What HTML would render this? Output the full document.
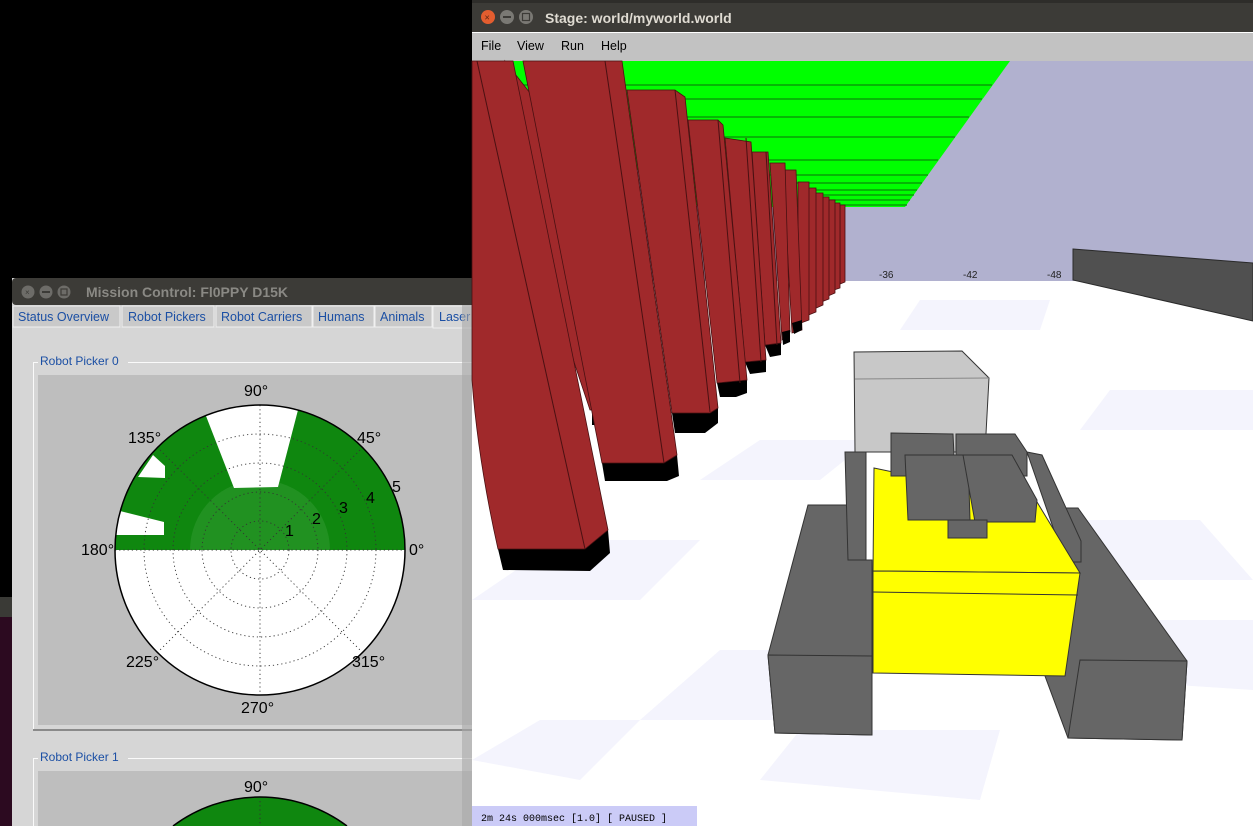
<!DOCTYPE html>
<html><head><meta charset="utf-8"><style>
html,body{margin:0;padding:0;width:1253px;height:826px;overflow:hidden;background:#000;font-family:"Liberation Sans",sans-serif}
svg{position:absolute;left:0;top:0}
</style></head><body>
<svg width="1253" height="826" viewBox="0 0 1253 826" xmlns="http://www.w3.org/2000/svg">
<rect x="0" y="0" width="1253" height="826" fill="#000"/>
<rect x="0" y="597" width="14" height="229" fill="#2c0a20"/>
<rect x="0" y="597" width="14" height="20" fill="#3a3a36"/>
<rect x="12" y="278" width="470" height="548" fill="#d6d6d6"/>
<rect x="12" y="278" width="470" height="27" rx="4" fill="#3c3b37"/>
<circle cx="28" cy="292" r="6.5" fill="#6d6c68"/><circle cx="46" cy="292" r="6.5" fill="#6d6c68"/><circle cx="64" cy="292" r="6.5" fill="#6d6c68"/>
<text x="25" y="295" font-size="8" fill="#3c3b37">×</text>
<rect x="42" y="291" width="8" height="2" fill="#3c3b37"/><rect x="61" y="289" width="6" height="6" fill="none" stroke="#3c3b37" stroke-width="1.2"/>
<text x="86" y="297" font-size="14" font-weight="bold" fill="#8a8984">Mission Control: Fl0PPY D15K</text>
<rect x="12" y="305" width="470" height="22" fill="#c6c6c6"/>
<g font-size="12.5" fill="#1b4fa4">
<rect x="13" y="306" width="107" height="21" fill="#c9c9c9" stroke="#f0f0f0"/><text x="18" y="321">Status Overview</text>
<rect x="122" y="306" width="92" height="21" fill="#c9c9c9" stroke="#f0f0f0"/><text x="128" y="321">Robot Pickers</text>
<rect x="216" y="306" width="96" height="21" fill="#c9c9c9" stroke="#f0f0f0"/><text x="221" y="321">Robot Carriers</text>
<rect x="313" y="306" width="61" height="21" fill="#c9c9c9" stroke="#f0f0f0"/><text x="318" y="321">Humans</text>
<rect x="375" y="306" width="57" height="21" fill="#c9c9c9" stroke="#f0f0f0"/><text x="380" y="321">Animals</text>
<rect x="433" y="306" width="50" height="22" fill="#d6d6d6" stroke="#f0f0f0"/><text x="439" y="321">Laser</text>
</g>
<rect x="33.5" y="362.5" width="450" height="368" fill="none" stroke="#fafafa"/>
<rect x="33" y="729" width="450" height="2" fill="#8a8a8a"/>
<rect x="38" y="375" width="440" height="350" fill="#bebebe"/>
<rect x="38" y="358" width="90" height="10" fill="#d6d6d6"/>
<text x="40" y="365" font-size="12" fill="#1b4fa4">Robot Picker 0</text>
<g>
<circle cx="260" cy="550" r="145" fill="#fff"/>
<path d="M115,550 A145,145 0 0 1 405,550 Z" fill="#0f870f"/>
<path d="M190,550 A70,70 0 0 1 330,550 Z" fill="#3ba13b" opacity="0.4"/>
<path d="M206,416 L234,488 L278,487 L298,410 A145,145 0 0 0 206,416 Z" fill="#fff"/>
<path d="M153,455 L165,466 L165,478 L138,477 Z" fill="#fff"/>
<path d="M120,511 L164,522 L164,535 L116,535 Z" fill="#fff"/>
<g fill="none" stroke="#333" stroke-width="0.9" stroke-dasharray="1.2,3">
<circle cx="260" cy="550" r="29"/><circle cx="260" cy="550" r="58"/><circle cx="260" cy="550" r="87"/><circle cx="260" cy="550" r="116"/>
<line x1="115" y1="550" x2="405" y2="550"/><line x1="260" y1="405" x2="260" y2="695"/>
<line x1="157" y1="447" x2="363" y2="653"/><line x1="363" y1="447" x2="157" y2="653"/>
</g>
<circle cx="260" cy="550" r="145" fill="none" stroke="#000" stroke-width="1.5"/>
<g font-size="16" fill="#000">
<text x="244" y="396">90°</text><text x="128" y="443">135°</text><text x="357" y="443">45°</text>
<text x="81" y="555">180°</text><text x="409" y="555">0°</text>
<text x="126" y="667">225°</text><text x="352" y="667">315°</text><text x="241" y="713">270°</text>
<text x="285" y="536">1</text><text x="312" y="524">2</text><text x="339" y="513">3</text><text x="366" y="503">4</text><text x="392" y="492">5</text>
</g>
</g>
<path d="M33.5,826 V758.5 H483.5" fill="none" stroke="#fafafa"/>
<rect x="38" y="771" width="440" height="55" fill="#bebebe"/>
<rect x="38" y="752" width="90" height="10" fill="#d6d6d6"/>
<text x="40" y="761" font-size="12" fill="#1b4fa4">Robot Picker 1</text>
<text x="244" y="792" font-size="16">90°</text>
<path d="M173,826 A145,145 0 0 1 347,826 Z" fill="#0f870f"/>
<path d="M173,826 A145,145 0 0 1 347,826" fill="none" stroke="#000" stroke-width="1.5"/>
<line x1="260" y1="801" x2="260" y2="826" stroke="#333" stroke-dasharray="1.2,3"/>
<rect x="462" y="305" width="10" height="521" fill="#a8a8a8" opacity="0.6"/>

<rect x="472" y="0" width="781" height="34" fill="#3c3b37"/>
<rect x="472" y="0" width="781" height="3" fill="#2e2d2a"/>
<circle cx="488" cy="17" r="7" fill="#e35d2f"/><text x="484.5" y="20.5" font-size="9" fill="#5a2310">×</text>
<circle cx="507" cy="17" r="7" fill="#7a7974"/><rect x="503" y="16" width="8" height="2" fill="#3c3b37"/>
<circle cx="526" cy="17" r="7" fill="#7a7974"/><rect x="522.5" y="13.5" width="7" height="7" fill="none" stroke="#3c3b37" stroke-width="1.2"/>
<text x="545" y="23" font-size="14" font-weight="bold" fill="#dfdbd2">Stage: world/myworld.world</text>
<rect x="472" y="32" width="781" height="29" fill="#c2c2c2"/>
<rect x="472" y="32" width="781" height="1" fill="#fff"/>
<g font-size="12.5" fill="#000"><text x="481" y="50">File</text><text x="517" y="50">View</text><text x="561" y="50">Run</text><text x="601" y="50">Help</text></g>
<rect x="472" y="61" width="781" height="765" fill="#fff"/>
<rect x="472" y="61" width="781" height="220" fill="#b1b1cf"/>
<g fill="#f4f4fd">
<polygon points="472,600 560,540 700,540 640,600"/>
<polygon points="640,720 720,650 880,650 830,720"/>
<polygon points="472,760 540,720 640,720 580,780"/>
<polygon points="700,480 760,440 870,440 820,480"/>
<polygon points="1000,580 1040,520 1200,520 1253,580"/>
<polygon points="1100,680 1140,620 1253,620 1253,690"/>
<polygon points="1080,430 1110,390 1253,390 1253,430"/>
<polygon points="900,330 920,300 1050,300 1040,330"/>
<polygon points="760,780 800,730 1000,730 980,800"/>
</g>
<polygon points="510,61 1010,61 905,207 845,207 700,207 520,100" fill="#00ff00"/>
<g stroke="#0a8a0a" stroke-width="1.2">
<line x1="520" y1="85" x2="992" y2="85"/><line x1="560" y1="99" x2="982" y2="99"/><line x1="600" y1="117" x2="969" y2="117"/>
<line x1="680" y1="137" x2="955" y2="137"/><line x1="730" y1="160" x2="938" y2="160"/><line x1="760" y1="175" x2="928" y2="175"/>
<line x1="790" y1="183" x2="922" y2="183"/><line x1="805" y1="190" x2="917" y2="190"/><line x1="815" y1="195" x2="914" y2="195"/>
<line x1="825" y1="200" x2="910" y2="200"/><line x1="835" y1="205" x2="907" y2="205"/>
</g>
<polygon points="1073,249 1253,263 1253,321 1073,280" fill="#505050" stroke="#2a2a2a"/>
<g font-size="10" fill="#222"><text x="879" y="278">-36</text><text x="963" y="278">-42</text><text x="1047" y="278">-48</text></g>
<g fill="#a0292b" stroke="#4a1012" stroke-width="0.8">
<polygon points="840,205 845,205 845,282 840,284"/>
<polygon points="834,203 840,203 840,288 834,290"/>
<polygon points="828,200 835,200 835,293 828,296"/>
<polygon points="821,197 829,197 829,299 821,302"/>
<polygon points="814,193 823,193 823,305 814,309"/>
<polygon points="806,188 816,188 816,312 806,316"/>
<polygon points="798,182 809,182 809,320 798,324"/>
<polygon points="783,170 796,170 802,330 792,333"/>
<polygon points="770,163 785,163 790,332 782,340"/>
</g>
<g fill="#000">
<polygon points="792,323 802,320 802,330 794,334"/>
<polygon points="782,332 790,330 790,342 783,345"/>
</g>
<polygon points="765,345 781,343 781,355 770,357" fill="#000"/>
<polygon points="752,152 768,152 781,343 765,345" fill="#a0292b" stroke="#4a1012" stroke-width="0.8"/>
<line x1="766" y1="152" x2="777" y2="345" stroke="#4a1012"/>
<polygon points="745,362 766,360 766,372 750,374" fill="#000"/>
<polygon points="725,138 751,142 766,360 745,362" fill="#a0292b" stroke="#4a1012" stroke-width="0.8"/>
<line x1="746" y1="138" x2="761" y2="362" stroke="#4a1012"/>
<polygon points="717,383 747,380 747,393 736,397 720,397" fill="#000"/>
<polygon points="688,120 718,120 723,125 747,380 717,383" fill="#a0292b" stroke="#4a1012" stroke-width="0.8"/>
<line x1="718" y1="120" x2="740" y2="383" stroke="#4a1012"/>
<polygon points="672,413 718,408 718,423 705,433 675,433" fill="#000"/>
<polygon points="627,90 675,90 685,97 718,408 710,413 672,413" fill="#a0292b" stroke="#4a1012" stroke-width="0.8"/>
<line x1="675" y1="90" x2="710" y2="412" stroke="#4a1012"/>
<polygon points="592,410 604,410 604,425 592,425" fill="#000"/>
<polygon points="505,61 530,93 604,410 590,410 520,200" fill="#a0292b" stroke="#4a1012" stroke-width="0.8"/>
<polygon points="602,463 677,455 679,476 667,481 605,481" fill="#000"/>
<polygon points="523,61 622,61 677,455 664,463 602,463" fill="#a0292b" stroke="#4a1012" stroke-width="0.8"/>
<line x1="605" y1="61" x2="664" y2="463" stroke="#4a1012"/>
<polygon points="498,549 585,549 608,530 610,553 590,571 503,570" fill="#000"/>
<path d="M472,61 L513,61 L608,530 L585,549 L498,549 Q478,460 472,380 Z" fill="#a0292b" stroke="#4a1012" stroke-width="0.8"/>
<line x1="477" y1="61" x2="585" y2="549" stroke="#4a1012"/>
<g stroke="#333" stroke-width="1">
<polygon points="854,352 962,351 989,378 985,452 855,452" fill="#c8c8c8"/>
<line x1="855" y1="379" x2="989" y2="378" stroke="#888"/>
<polygon points="808,505 850,505 850,560 872,560 872,735 775,733 768,655" fill="#666"/>
<polygon points="768,655 872,656 872,735 775,733" fill="#666"/>
<polygon points="1060,508 1078,508 1187,661 1182,740 1068,738 1045,676" fill="#666"/>
<polygon points="1080,660 1187,661 1182,740 1068,738" fill="#666"/>
<polygon points="845,452 866,452 866,560 848,560" fill="#666"/>
<polygon points="1027,452 1042,455 1081,541 1081,562 1065,562" fill="#666"/>
<polygon points="874,468 1037,502 1080,573 873,571" fill="#ffff00"/>
<polygon points="873,571 1080,573 1065,676 873,673" fill="#ffff00"/>
<line x1="873" y1="592" x2="1078" y2="595"/>
<polygon points="891,433 953,434 955,476 891,476" fill="#666"/>
<polygon points="956,434 1015,434 1027,452 1027,476 956,476" fill="#666"/>
<polygon points="905,455 968,455 970,520 908,520" fill="#666"/>
<polygon points="963,455 1012,455 1037,500 1035,522 975,522" fill="#666"/>
<polygon points="948,520 987,520 987,538 948,538" fill="#666"/>
</g>
<rect x="472" y="806" width="225" height="20" fill="#cbcbf7"/>
<text x="481" y="821" font-size="10" font-family="Liberation Mono,monospace" fill="#000">2m 24s 000msec [1.0] [ PAUSED ]</text>
</svg>
</body></html>
